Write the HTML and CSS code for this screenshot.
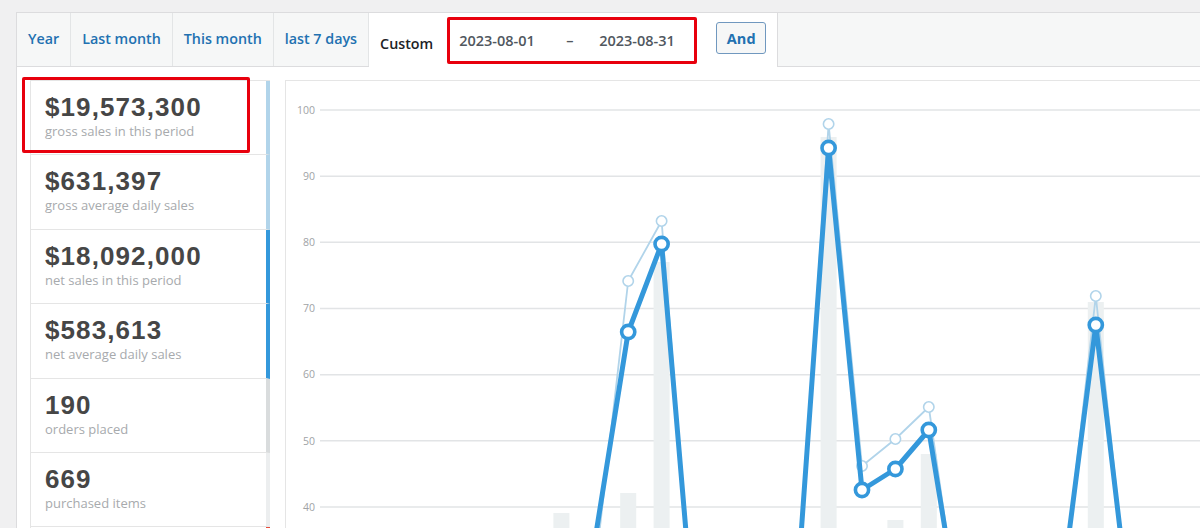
FILE: index.html
```html
<!DOCTYPE html>
<html lang="en">
<head>
<meta charset="utf-8">
<title>Sales report</title>
<link rel="stylesheet" href="styles.css">
</head>
<body>
<div class="wrap">
  <div class="postbox">
    <div class="tabs">
      <ul class="range">
        <li class="tab"><a href="#">Year</a></li>
        <li class="tab"><a href="#">Last month</a></li>
        <li class="tab"><a href="#">This month</a></li>
        <li class="tab"><a href="#">last 7 days</a></li>
        <li class="tab custom">
          <span class="custom-label">Custom</span>
          <div class="date-range">
            <span class="date first">2023-08-01</span>
            <span class="dash">–</span>
            <span class="date">2023-08-31</span>
          </div>
          <button class="btn" type="button">And</button>
        </li>
      </ul>
    </div>
    <div class="content">
      <div class="legend">
        <ul class="items">
          <li class="item c1"><strong>$19,573,300</strong><span>gross sales in this period</span></li>
          <li class="item c1"><strong>$631,397</strong><span>gross average daily sales</span></li>
          <li class="item c2"><strong>$18,092,000</strong><span>net sales in this period</span></li>
          <li class="item c2"><strong>$583,613</strong><span>net average daily sales</span></li>
          <li class="item c3"><strong>190</strong><span>orders placed</span></li>
          <li class="item c4"><strong>669</strong><span>purchased items</span></li>
          <li class="item c5"></li>
        </ul>
        <div class="highlight"></div>
      </div>
      <div class="chart">
        <svg class="plot" width="950" height="460" viewBox="0 0 950 460">
          <g transform="translate(-286 -81)">
            <g class="grid">
              <line x1="320" x2="1300" y1="110" y2="110"/>
              <line x1="320" x2="1300" y1="176.2" y2="176.2"/>
              <line x1="320" x2="1300" y1="242.3" y2="242.3"/>
              <line x1="320" x2="1300" y1="308.5" y2="308.5"/>
              <line x1="320" x2="1300" y1="374.7" y2="374.7"/>
              <line x1="320" x2="1300" y1="440.8" y2="440.8"/>
              <line x1="320" x2="1300" y1="507" y2="507"/>
            </g>
            <g class="ylabels">
              <text x="315" y="113.7">100</text>
              <text x="315" y="179.9">90</text>
              <text x="315" y="246">80</text>
              <text x="315" y="312.2">70</text>
              <text x="315" y="378.4">60</text>
              <text x="315" y="444.5">50</text>
              <text x="315" y="510.7">40</text>
            </g>
            <g class="bars">
              <rect x="553.4" y="513" width="16" height="100"/>
              <rect x="620.2" y="493" width="16" height="100"/>
              <rect x="653.6" y="262" width="16" height="400"/>
              <rect x="820.6" y="137" width="16" height="500"/>
              <rect x="887.4" y="520" width="16" height="100"/>
              <rect x="920.8" y="454" width="16" height="100"/>
              <rect x="1087.8" y="302" width="16" height="300"/>
            </g>
            <polyline class="light" points="561.4,700 594.8,572 628.2,281 661.6,221 695,643 728.4,700 761.8,700 795.2,620 828.6,124 862,466 895.4,439 928.8,407 962.2,640 995.6,700 1029,700 1062.4,590 1095.8,296 1129.2,610 1162.6,700 1229.4,700"/>
            <g class="light-dots">
              <circle cx="628.2" cy="281" r="5.2"/>
              <circle cx="661.6" cy="221" r="5.2"/>
              <circle cx="828.6" cy="124" r="5.2"/>
              <circle cx="862" cy="466" r="5.2"/>
              <circle cx="895.4" cy="439" r="5.2"/>
              <circle cx="928.8" cy="407" r="5.2"/>
              <circle cx="1095.8" cy="296" r="5.2"/>
            </g>
            <polyline class="dark" points="561.4,700 594.8,541 628.2,332 661.6,244 695,638 728.4,700 761.8,700 795.2,617 828.6,148 862,490 895.4,469 928.8,430 962.2,634 995.6,700 1029,700 1062.4,585 1095.8,325 1129.2,607 1162.6,700 1229.4,700"/>
            <g class="dark-dots">
              <circle cx="628.2" cy="332" r="6.6"/>
              <circle cx="661.6" cy="244" r="6.6"/>
              <circle cx="828.6" cy="148" r="6.6"/>
              <circle cx="862" cy="490" r="6.6"/>
              <circle cx="895.4" cy="469" r="6.6"/>
              <circle cx="928.8" cy="430" r="6.6"/>
              <circle cx="1095.8" cy="325" r="6.6"/>
            </g>
          </g>
        </svg>
      </div>
    </div>
  </div>
</div>
</body>
</html>
```

FILE: styles.css
```css
html, body {
  margin: 0;
  padding: 0;
}

body {
  background: #f0f0f1;
  font-family: "Open Sans", "Noto Sans", sans-serif;
  overflow: hidden;
  height: 528px;
}

.wrap {
  padding: 12px 0 0 16px;
}

.postbox {
  width: 1240px;
  height: 620px;
  border: 1px solid #dcdcde;
  background: #fff;
}

/* ---------- tab bar ---------- */
.tabs {
  display: flex;
  height: 53px;
  background: #f6f7f7;
  border-bottom: 1px solid #dcdcde;
}

.range {
  list-style: none;
  margin: 0;
  padding: 0;
  display: flex;
  height: 53px;
}

.tab {
  display: flex;
  align-items: center;
  padding: 0 11px 3px;
  border-right: 1px solid #e3e5e6;
}

.tab a {
  color: #2271b1;
  font-size: 14.3px;
  font-weight: 600;
  text-decoration: none;
  white-space: nowrap;
}

.tab.custom {
  background: #fff;
  height: 54px;
  box-sizing: border-box;
  padding: 0 11px 0 11px;
  border-right: 1px solid #dcdcde;
}

.custom-label {
  font-size: 14.3px;
  font-weight: 600;
  color: #1d2327;
  padding-top: 7px;
  margin-right: 14px;
}

.date-range {
  display: flex;
  flex: 0 0 250px;
  align-items: center;
  box-sizing: border-box;
  width: 250px;
  height: 47px;
  border: 3px solid #e8000d;
  border-radius: 2px;
  padding: 0 0 0 9px;
  color: #50575e;
  font-size: 14.5px;
  font-weight: 600;
}

.date.first {
  width: 107px;
}

.dash {
  width: 8px;
  margin-right: 25px;
}

.btn {
  flex: 0 0 50px;
  margin-left: 19px;
  margin-bottom: 4px;
  height: 32px;
  width: 50px;
  padding: 0;
  border: 1px solid #7098bf;
  border-radius: 3px;
  background: #f6f7f7;
  color: #2271b1;
  font-family: "Open Sans", sans-serif;
  font-size: 14.5px;
  font-weight: 700;
}

/* ---------- content ---------- */
.content {
  display: flex;
  gap: 15px;
  padding: 13px 0 0 13px;
}

.legend {
  position: relative;
  flex: 0 0 240px;
  box-sizing: border-box;
  border-top: 1px solid #e5e5e5;
  border-left: 1px solid #e5e5e5;
}

.items {
  list-style: none;
  margin: 0;
  padding: 0;
}

.item {
  box-sizing: border-box;
  height: 74.4px;
  padding: 14px 0 0 14px;
  border-bottom: 1px solid #e5e5e5;
  border-right: 4px solid #b1d4ea;
}

.item strong {
  display: block;
  font-family: "Liberation Sans", Arial, sans-serif;
  font-weight: 700;
  font-size: 26px;
  line-height: 25px;
  letter-spacing: 1.1px;
  color: #464646;
}

.item span {
  display: block;
  margin-top: 2px;
  font-size: 13px;
  line-height: 18px;
  color: #a7aaad;
}

.c1 { border-right-color: #b1d4ea; }
.c2 { border-right-color: #3498db; }
.c3 { border-right-color: #d9dcdd; }
.c4 { border-right-color: #eceeef; }
.c5 { border-right-color: #e74c3c; }

.highlight {
  position: absolute;
  left: -9px;
  top: -4px;
  width: 228px;
  height: 76px;
  box-sizing: border-box;
  border: 3px solid #e8000d;
  border-radius: 2px;
}

/* ---------- chart ---------- */
.chart {
  flex: 1;
  height: 520px;
  border: 1px solid #e5e5e5;
  overflow: hidden;
}

.plot {
  display: block;
}

.grid line {
  stroke: #e2e4e6;
  stroke-width: 1.6;
}

.ylabels text {
  font-family: "Open Sans", sans-serif;
  font-size: 10.5px;
  fill: #a0a3a6;
  text-anchor: end;
}

.bars rect {
  fill: #ecf0f1;
}

.light {
  fill: none;
  stroke: #b1d4ea;
  stroke-width: 1.8;
  stroke-linejoin: round;
}

.light-dots circle {
  fill: #fff;
  stroke: #b1d4ea;
  stroke-width: 1.6;
}

.dark {
  fill: none;
  stroke: #3498db;
  stroke-width: 5;
  stroke-linejoin: round;
}

.dark-dots circle {
  fill: #fff;
  stroke: #3498db;
  stroke-width: 3.6;
}
```
